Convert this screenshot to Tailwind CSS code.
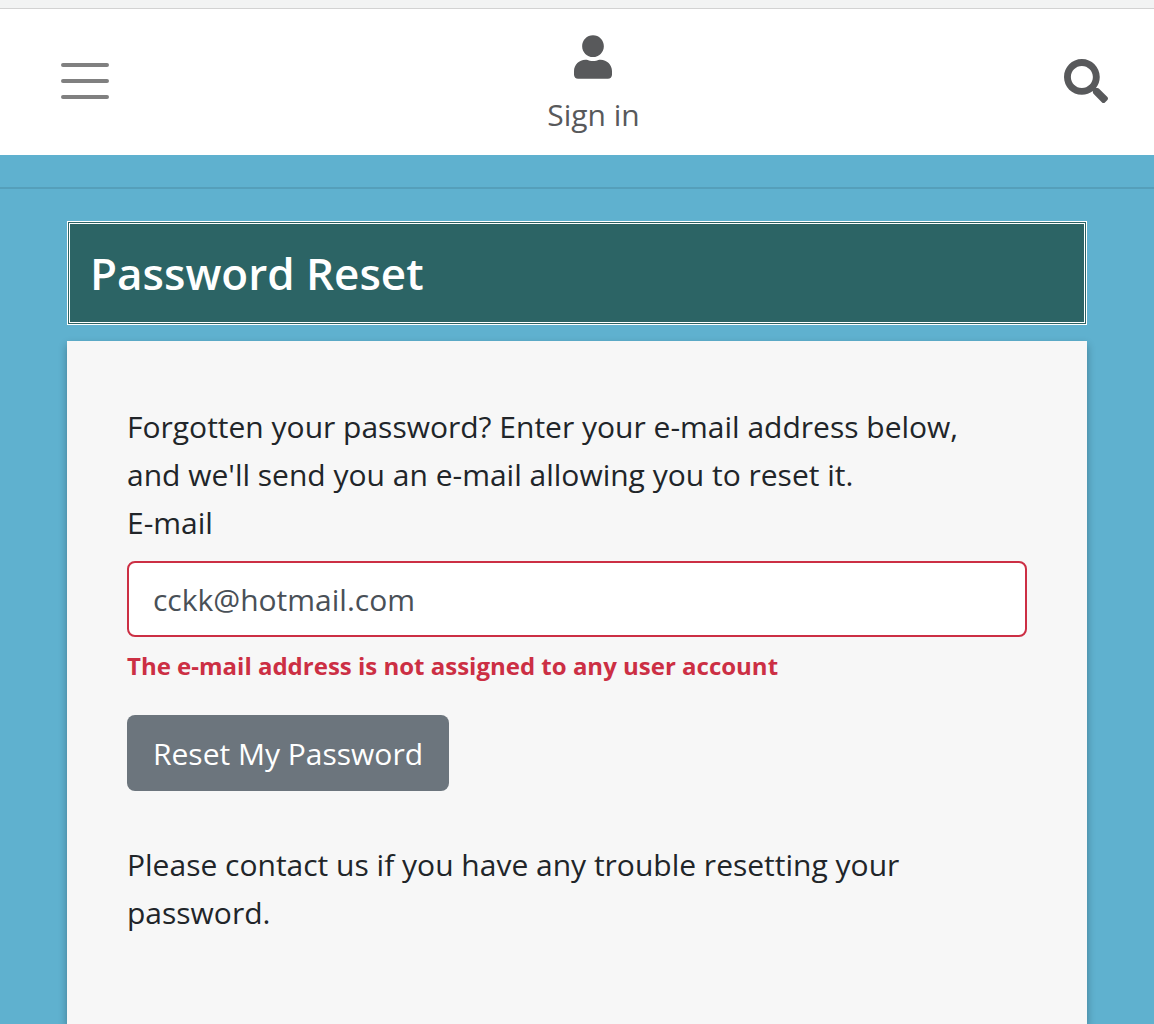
<!DOCTYPE html>
<html lang="en">
<head>
<meta charset="utf-8">
<meta name="viewport" content="width=device-width, initial-scale=1">
<title>Password Reset</title>
<script src="https://cdn.jsdelivr.net/npm/@tailwindcss/browser@4"></script>
</head>
<body class="flex min-h-screen flex-col bg-[#5fb1cf] font-['Segoe_UI','Open_Sans',sans-serif] text-[30px] leading-12 text-[#212529]">
<header class="border-t-8 border-[#f2f3f3] bg-white">
  <nav class="flex h-[147px] items-center justify-between border-t border-[#d2d2d2] pr-[46px] pb-0.5 pl-[47px]">
    <button type="button" aria-label="Menu" class="px-2">
      <svg class="size-[60px]" viewBox="0 0 30 30" fill="none" stroke="#808080" stroke-width="2" stroke-linecap="round" stroke-miterlimit="10"><path d="M4 7h22M4 15h22M4 23h22"/></svg>
    </button>
    <a href="#" class="flex flex-col items-center gap-3 pt-3 text-[#58595b]">
      <svg class="h-11 w-[38px]" viewBox="0 0 448 512" fill="currentColor"><path d="M224 256c70.7 0 128-57.3 128-128S294.7 0 224 0 96 57.3 96 128s57.3 128 128 128zm89.6 32h-16.7c-22.2 10.2-46.9 16-72.9 16s-50.6-5.8-72.9-16h-16.7C60.2 288 0 348.2 0 422.4V464c0 26.5 21.5 48 48 48h352c26.5 0 48-21.5 48-48v-41.6c0-74.2-60.2-134.4-134.4-134.4z"/></svg>
      <span>Sign in</span>
    </a>
    <a href="#" aria-label="Search" class="text-[#58595b]">
      <svg class="size-11" viewBox="0 0 512 512" fill="currentColor"><path d="M505 442.7L405.3 343c-4.5-4.5-10.6-7-17-7H372c27.6-35.3 44-79.7 44-128C416 93.1 322.9 0 208 0S0 93.1 0 208s93.1 208 208 208c48.3 0 92.7-16.4 128-44v16.3c0 6.4 2.5 12.5 7 17l99.7 99.7c9.4 9.4 24.6 9.4 33.9 0l28.3-28.3c9.4-9.4 9.4-24.6.1-34zM208 336c-70.7 0-128-57.2-128-128 0-70.7 57.2-128 128-128 70.7 0 128 57.2 128 128 0 70.700-57.2 128-128 128z"/></svg>
    </a>
  </nav>
</header>
<hr class="my-8 border-t-2 border-[#559fba]">
<main class="mx-[67px] flex grow flex-col gap-4">
  <h1 class="border-3 border-double border-white bg-[#2c6465] px-5 py-5 text-[44px] leading-[58px] font-semibold text-white">Password Reset</h1>
  <section class="grow bg-[#f7f7f7] px-[60px] py-[62px] shadow-[0_4px_8px_rgba(0,0,0,0.3)]">
    <p class="pr-4">Forgotten your password? Enter your e-mail address below, and we'll send you an e-mail allowing you to reset it.</p>
    <form>
      <label for="email" class="block">E-mail</label>
      <input id="email" type="email" value="cckk@hotmail.com" aria-describedby="email-error" aria-invalid="true" class="mt-[14px] block h-[76px] w-full rounded-lg border-2 border-[#cc2f44] bg-white px-6 text-[#495057]">
      <p id="email-error" class="mt-[10px] text-2xl leading-[38px] font-bold text-[#cc2f44]">The e-mail address is not assigned to any user account</p>
      <button type="button" class="mt-[30px] h-[76px] rounded-lg bg-[#6c757d] px-[26px] pt-0.5 text-white">Reset My Password</button>
    </form>
    <p class="mt-[50px]">Please contact us if you have any trouble resetting your password.</p>
  </section>
</main>
</body>
</html>
